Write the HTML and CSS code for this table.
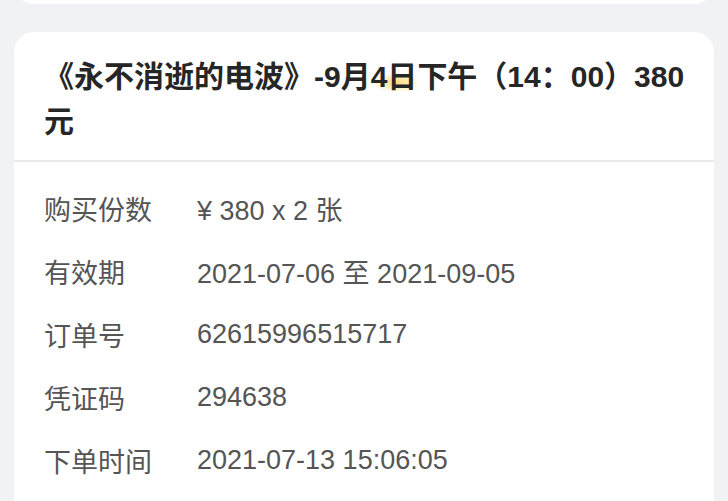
FILE: index.html
```html
<!DOCTYPE html>
<html lang="zh-CN">
<head>
<meta charset="utf-8">
<link rel="stylesheet" href="styles.css">
</head>
<body>
<div class="page">
  <div class="card card-top"></div>
  <div class="card">
    <div class="title">《永不消逝的电波》-9月<span class="hl">4日</span>下午（14：00）380元</div>
    <div class="rows">
      <div class="row"><span class="label">购买份数</span><span class="value">¥ 380 x 2 张</span></div>
      <div class="row"><span class="label">有效期</span><span class="value">2021-07-06 至 2021-09-05</span></div>
      <div class="row"><span class="label">订单号</span><span class="value">62615996515717</span></div>
      <div class="row"><span class="label">凭证码</span><span class="value">294638</span></div>
      <div class="row"><span class="label">下单时间</span><span class="value">2021-07-13 15:06:05</span></div>
    </div>
  </div>
</div>
</body>
</html>
```
FILE: styles.css
```css
* { box-sizing: border-box; }
html, body { margin: 0; padding: 0; }
body {
  background: #f1f2f4;
  font-family: "Liberation Sans", "Noto Sans CJK SC", sans-serif;
  width: 728px;
  height: 501px;
  overflow: hidden;
}
.page {
  display: flex;
  flex-direction: column;
  gap: 28px;
  padding: 0 14px;
  margin-top: -40px;
}
.card {
  background: #fff;
  border-radius: 20px;
}
.card-top {
  height: 44px;
}
.title {
  font-size: 30px;
  font-weight: bold;
  color: #262626;
  line-height: 45px;
  padding: 22px 28px 16px 30px;
  border-bottom: 2px solid #e9e9eb;
}
.hl {
  background: radial-gradient(ellipse 55% 30% at 55% 68%, rgba(248, 205, 70, 0.75), rgba(248, 205, 70, 0) 100%);
}
.rows {
  padding: 15px 30px 40px 30px;
}
.row {
  display: flex;
  align-items: center;
  height: 63px;
  font-size: 27px;
  color: #555;
}
.label {
  width: 153px;
  flex: none;
}
.value {
  color: #555;
}
```
